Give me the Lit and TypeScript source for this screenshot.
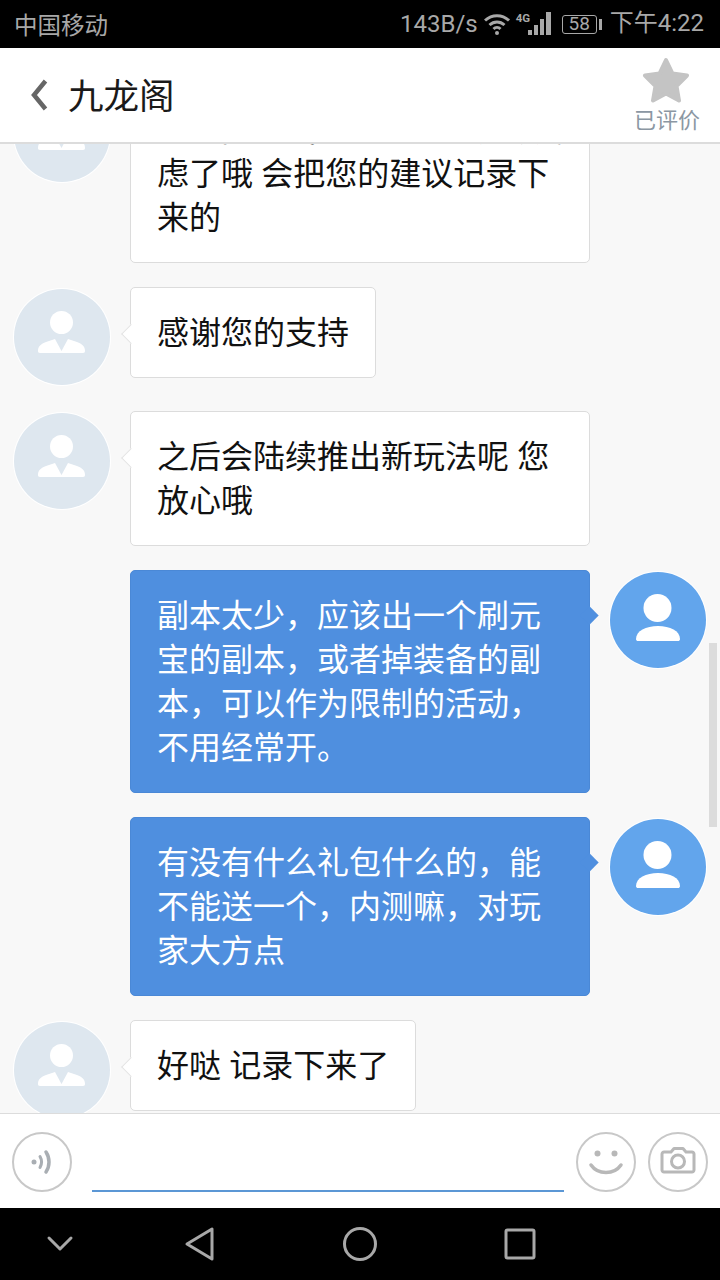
import { LitElement, html, css } from 'lit';
import { customElement } from 'lit/decorators.js';

type Msg = { me?: boolean; wide?: boolean; lines: string };

const messages: Msg[] = [
  { wide: true, lines: '这个问题我们已经帮您反馈考\n虑了哦 会把您的建议记录下\n来的' },
  { lines: '感谢您的支持' },
  { wide: true, lines: '之后会陆续推出新玩法呢 您\n放心哦' },
  { me: true, wide: true, lines: '副本太少，应该出一个刷元\n宝的副本，或者掉装备的副\n本，可以作为限制的活动，\n不用经常开。' },
  { me: true, wide: true, lines: '有没有什么礼包什么的，能\n不能送一个，内测嘛，对玩\n家大方点' },
  { lines: '好哒 记录下来了' },
];

const agentIcon = html`<svg class="avatar-icon" viewBox="0 0 96 96">
  <circle cx="47.500" cy="33.500" r="11.500" fill="#fff" />
  <path d="M24 62c0-5 3-7 8-9l9-3 6.500 12 6.500-12 9 3c5 2 8 4 8 9 0 1-.5 2-2 2H26c-1.500 0-2-1-2-2z" fill="#fff" />
</svg>`;

const meIcon = html`<svg class="avatar-icon" viewBox="0 0 96 96">
  <circle cx="47.500" cy="36" r="14" fill="#fff" />
  <path d="M26 67c0-8 10-13 22-13s22 5 22 13c0 1.500-1 2-2 2H28c-1 0-2-.5-2-2z" fill="#fff" />
</svg>`;

@customElement('app-root')
export class AppRoot extends LitElement {
  static styles = css`
    :host {
      display: flex;
      flex-direction: column;
      width: 720px;
      height: 1280px;
      overflow: hidden;
      font-family: 'Noto Sans CJK SC', 'Noto Sans', sans-serif;
    }

    .status {
      flex: none;
      height: 48px;
      background: #000;
      color: #a8a8a8;
      display: flex;
      align-items: center;
      padding: 0 16px 0 14px;
      font-size: 23.500px;
    }
    .carrier {
      flex: 1;
    }
    .speed {
      font-family: Roboto, sans-serif;
      font-size: 24px;
      margin-right: 6px;
    }
    .net {
      position: relative;
      display: flex;
      align-items: center;
      margin-left: 5px;
      width: 36px;
      height: 28px;
    }
    .net-label {
      position: absolute;
      left: 1px;
      top: 2px;
      font-family: Roboto, sans-serif;
      font-size: 11.500px;
      font-weight: 700;
      line-height: 12px;
    }
    .battery {
      margin-left: 11px;
      display: flex;
      align-items: center;
      gap: 2px;
    }
    .battery-body {
      box-sizing: border-box;
      width: 35px;
      height: 19px;
      border: 1.500px solid #a8a8a8;
      border-radius: 3px;
      font-family: Roboto, sans-serif;
      font-size: 19px;
      line-height: 16px;
      text-align: center;
    }
    .battery-tip {
      width: 3px;
      height: 11px;
      background: #a8a8a8;
    }
    .time {
      margin-left: 8px;
      font-size: 24px;
      line-height: 46px;
      height: 48px;
      font-family: Roboto, 'Noto Sans CJK SC', sans-serif;
    }

    .header {
      flex: none;
      height: 94px;
      background: #fff;
      border-bottom: 2px solid #dcdcdc;
      display: flex;
      align-items: center;
      padding: 0 20px 0 30px;
    }
    .back {
      width: 18px;
      height: 32px;
      margin-right: 20px;
    }
    .title {
      flex: 1;
      font-size: 35.500px;
      line-height: 44px;
      margin-top: -2px;
      color: #1a1a1a;
    }
    .rating {
      display: flex;
      flex-direction: column;
      align-items: center;
      font-size: 22px;
      line-height: 26px;
      color: #8b97a3;
      margin-top: -3px;
    }
    .star {
      width: 48px;
      height: 46px;
      margin-bottom: 2px;
      margin-left: -2px;
    }

    .chat {
      position: relative;
      flex: 1;
      min-height: 0;
      overflow: hidden;
      background: #f8f8f8;
    }
    .list {
      display: flex;
      flex-direction: column;
      gap: 24px;
      margin-top: -60px;
    }
    .row {
      display: flex;
      align-items: flex-start;
      gap: 20px;
      padding: 0 14px;
    }
    .row.me {
      justify-content: flex-end;
    }
    .row.me .avatar {
      order: 2;
    }
    .avatar {
      flex: none;
      width: 96px;
      height: 96px;
      margin-top: 2px;
      margin-bottom: 2px;
      border-radius: 50%;
      background: #dee7ef;
      box-shadow: 0 0 0 1px #fff;
    }
    .row.me .avatar {
      background: #62a5ec;
    }
    .avatar-icon {
      display: block;
      width: 96px;
      height: 96px;
    }
    .bubble {
      position: relative;
      box-sizing: border-box;
      padding: 20px 26px 25px;
      background: #fff;
      border: 1px solid #dcdcdc;
      border-radius: 5px;
      font-size: 32px;
      line-height: 44px;
      word-spacing: 1px;
      color: #111;
      white-space: pre;
    }
    .bubble.wide {
      width: 460px;
    }
    .bubble::before {
      content: '';
      position: absolute;
      top: 39px;
      left: -7px;
      width: 13px;
      height: 13px;
      background: #fff;
      border-left: 1px solid #e4e4e4;
      border-bottom: 1px solid #e4e4e4;
      transform: rotate(45deg);
    }
    .row.me .bubble {
      background: #4f8fdf;
      border-color: #4a88d6;
      color: #fff;
    }
    .row.me .bubble::before {
      top: 38px;
      left: auto;
      right: -7px;
      background: #4f8fdf;
      border: none;
    }
    .scrollbar {
      position: absolute;
      top: 499px;
      right: 3px;
      width: 8px;
      height: 184px;
      background: #dcdcdc;
    }

    .inputbar {
      flex: none;
      height: 94px;
      background: #fff;
      border-top: 1px solid #dcdcdc;
      display: flex;
      align-items: center;
      padding: 0 12px;
    }
    .round {
      flex: none;
      box-sizing: border-box;
      width: 60px;
      height: 60px;
      border-radius: 50%;
      border: 2px solid #c8c8c8;
      display: flex;
      align-items: center;
      justify-content: center;
      margin-top: 2px;
    }
    .round svg {
      display: block;
      width: 60px;
      height: 60px;
      flex: none;
    }
    .field {
      flex: none;
      width: 472px;
      height: 60px;
      margin: 2px 12px 0 20px;
      box-sizing: border-box;
      border-bottom: 2px solid #5b97d5;
    }
    .round + .field + .round + .round {
      margin-left: 12px;
    }

    .nav {
      flex: none;
      height: 72px;
      background: #000;
    }
    .nav svg {
      display: block;
    }
  `;

  renderStatus() {
    return html`<div class="status">
      <span class="carrier">中国移动</span>
      <span class="speed">143B/s</span>
      <svg width="26" height="24" viewBox="0 0 26 24" fill="none" stroke="#a8a8a8" stroke-width="3">
        <path d="M1 8.500c7-6.500 17-6.500 24 0" />
        <path d="M5.500 13c4.500-4 10.500-4 15 0" />
        <path d="M9.500 17c2-2 5-2 7 0" />
        <circle cx="13" cy="21" r="2" fill="#a8a8a8" stroke="none" />
      </svg>
      <span class="net">
        <span class="net-label">4G</span>
        <svg width="36" height="28" viewBox="0 0 36 28" fill="#a8a8a8">
          <rect x="13" y="20" width="4" height="5" />
          <rect x="19" y="15" width="4" height="10" />
          <rect x="25" y="9" width="4" height="16" />
          <rect x="31" y="2" width="5" height="23" />
        </svg>
      </span>
      <span class="battery">
        <span class="battery-body">58</span>
        <span class="battery-tip"></span>
      </span>
      <span class="time">下午4:22</span>
    </div>`;
  }

  renderHeader() {
    return html`<div class="header">
      <svg class="back" viewBox="0 0 18 32">
        <path d="M15.500 2 4 16l11.500 14" fill="none" stroke="#666" stroke-width="4.500" />
      </svg>
      <div class="title">九龙阁</div>
      <div class="rating">
        <svg class="star" viewBox="0 0 48 46">
          <path
            d="M24 3l6.500 13.500 14.500 2-10.500 10.500 2.500 14.500L24 36.500l-13 7 2.500-14.500L3 18.500l14.500-2z"
            fill="#c4c4c4"
            stroke="#c4c4c4"
            stroke-width="4"
            stroke-linejoin="round"
          />
        </svg>
        <span>已评价</span>
      </div>
    </div>`;
  }

  renderMessage(m: Msg) {
    return html`<div class="row ${m.me ? 'me' : ''}">
      <div class="avatar">${m.me ? meIcon : agentIcon}</div>
      <div class="bubble ${m.wide ? 'wide' : ''}">${m.lines}</div>
    </div>`;
  }

  renderInput() {
    return html`<div class="inputbar">
      <div class="round">
        <svg viewBox="0 0 60 60" fill="none" stroke="#a9aeb3" stroke-linecap="round">
          <circle cx="22" cy="30" r="2.500" fill="#a9aeb3" stroke="none" />
          <path d="M28 24.500c2 3.500 2 7.500 0 11" stroke-width="3" />
          <path d="M34 20c4 6 4 14 0 20" stroke-width="3.500" />
        </svg>
      </div>
      <div class="field"></div>
      <div class="round">
        <svg viewBox="0 0 60 60" fill="none" stroke="#b8b8b8" stroke-linecap="round">
          <circle cx="21.500" cy="21.500" r="3" fill="#b8b8b8" stroke="none" />
          <circle cx="38.500" cy="21.500" r="3" fill="#b8b8b8" stroke="none" />
          <path d="M15 33c7 10 23 10 30 0" stroke-width="3.500" />
        </svg>
      </div>
      <div class="round">
        <svg viewBox="0 0 60 60" fill="none" stroke="#b8b8b8" stroke-width="3" stroke-linejoin="round">
          <path d="M17 20h6l3-3.500h9l3 3.500h6c1 0 2 1 2 2v16c0 1-1 2-2 2H16c-1 0-2-1-2-2V22c0-1 1-2 2-2z" />
          <circle cx="30" cy="29.500" r="6.500" />
        </svg>
      </div>
    </div>`;
  }

  renderNav() {
    return html`<div class="nav">
      <svg width="720" height="72" viewBox="0 0 720 72" fill="none" stroke="#a8a8a8" stroke-width="3" stroke-linejoin="round" stroke-linecap="round">
        <path d="M49 30l11 11 11-11" />
        <path d="M212 21v30l-25-15z" />
        <circle cx="360" cy="36" r="15.500" />
        <rect x="506" y="22" width="28" height="28" rx="1.500" />
      </svg>
    </div>`;
  }

  render() {
    return html`
      ${this.renderStatus()} ${this.renderHeader()}
      <div class="chat">
        <div class="list">${messages.map((m) => this.renderMessage(m))}</div>
        <div class="scrollbar"></div>
      </div>
      ${this.renderInput()} ${this.renderNav()}
    `;
  }
}
